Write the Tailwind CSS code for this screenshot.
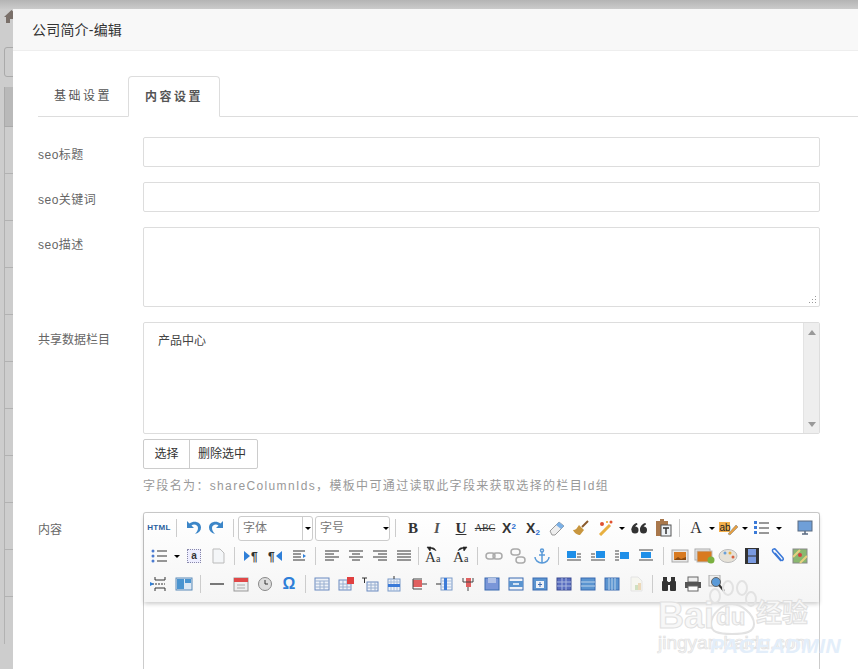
<!DOCTYPE html>
<html lang="zh-CN">
<head>
<meta charset="UTF-8">
<title>公司简介-编辑</title>
<script src="https://cdn.jsdelivr.net/npm/@tailwindcss/browser@4"></script>
</head>
<body class="font-['Liberation_Sans','Noto_Sans_CJK_SC',sans-serif]">
<div class="relative w-[858px] h-[669px] overflow-hidden bg-[#cdcdcd]">
  <!-- page behind the dialog -->
  <div class="h-[9px] bg-gradient-to-b from-[#b4b4b4] to-[#cbcbcb]"></div>
  <div class="pl-[4px]">
    <svg class="mt-[1px] w-[15px] h-[13px]" viewBox="0 0 15 13"><path d="M7.500 0 0 7h2v6h4V9h3v4h4V7h2z" fill="#7a706a"/></svg>
    <div class="mt-[24px] h-[30px] border border-[#aaa] rounded-[3px]"></div>
    <div class="mt-[10px] h-[40px] bg-[#b9b9b9] border-l border-b border-[#aaa]"></div>
    <div class="h-[47px] border-l border-b border-[#b2b2b2]"></div>
    <div class="h-[47px] border-l border-b border-[#b2b2b2]"></div>
    <div class="h-[47px] border-l border-b border-[#b2b2b2]"></div>
    <div class="h-[47px] border-l border-b border-[#b2b2b2]"></div>
    <div class="h-[47px] border-l border-b border-[#b2b2b2]"></div>
    <div class="h-[47px] border-l border-b border-[#b2b2b2]"></div>
    <div class="h-[47px] border-l border-b border-[#b2b2b2]"></div>
    <div class="h-[47px] border-l border-b border-[#b2b2b2]"></div>
    <div class="h-[47px] border-l border-b border-[#b2b2b2]"></div>
    <div class="h-[47px] border-l border-b border-[#b2b2b2]"></div>
    <div class="h-[47px] border-l border-[#b2b2b2]"></div>
  </div>

  <!-- dialog -->
  <div class="absolute left-[13px] top-[9px] w-[845px] h-[660px] bg-white">
    <div class="h-[42px] bg-[#f8f8f8] border-b border-[#eee] pl-[19px] text-[14px] leading-[42px] tracking-[.2px] text-[#333]">公司简介-编辑</div>

    <div class="mt-[25px] ml-[25px] flex h-[41px] border-b border-[#ddd] text-[12px] tracking-[2.500px] text-[#555]">
      <div class="w-[90px] pl-[16px] leading-[41px]">基础设置</div>
      <div class="w-[92px] h-[41px] pl-[16px] leading-[41px] font-bold bg-white border border-[#ddd] border-b-white rounded-t-[4px]">内容设置</div>
    </div>

    <div class="mt-[20px] ml-[25px] w-[782px] text-[12px] text-[#666]">
      <div class="flex h-[30px] mb-[15px]">
        <div class="w-[105px] leading-[36px] tracking-[.5px]">seo标题</div>
        <div class="w-[677px] border border-[#ddd] rounded-[2px]"></div>
      </div>
      <div class="flex h-[30px] mb-[15px]">
        <div class="w-[105px] leading-[36px] tracking-[.5px]">seo关键词</div>
        <div class="w-[677px] border border-[#ddd] rounded-[2px]"></div>
      </div>
      <div class="flex h-[80px] mb-[15px]">
        <div class="w-[105px] leading-[36px] tracking-[.5px]">seo描述</div>
        <div class="relative w-[677px] border border-[#ddd] rounded-[2px]">
          <svg class="absolute right-[1px] bottom-[1px] w-[10px] h-[10px]" viewBox="0 0 10 10" fill="#999"><rect x="7" y="1" width="1" height="1"/><rect x="4" y="4" width="1" height="1"/><rect x="7" y="4" width="1" height="1"/><rect x="1" y="7" width="1" height="1"/><rect x="4" y="7" width="1" height="1"/><rect x="7" y="7" width="1" height="1"/></svg>
        </div>
      </div>
      <div class="flex">
        <div class="w-[105px] leading-[36px]">共享数据栏目</div>
        <div class="w-[677px]">
          <div class="flex h-[112px] border border-[#ddd] rounded-[2px]">
            <div class="flex-1 pl-[14px] pt-[11px] leading-[14px] text-[#444]">产品中心</div>
            <div class="relative w-[16px] bg-[#eee] border-l border-[#e3e3e3]">
              <div class="absolute left-[4px] top-[7px] border-x-[4px] border-x-transparent border-b-[5px] border-b-[#999]"></div>
              <div class="absolute left-[4px] bottom-[6px] border-x-[4px] border-x-transparent border-t-[5px] border-t-[#999]"></div>
            </div>
          </div>
          <div class="mt-[5px] flex w-[115px] h-[30px] border border-[#ccc] rounded-[2px] leading-[28px] text-[#333]">
            <div class="w-[46px] border-r border-[#ccc] text-center">选择</div>
            <div class="flex-1 pl-[8px]">删除选中</div>
          </div>
          <div class="mt-[9px] text-[12px] leading-[16px] tracking-[1.350px] text-[#999] whitespace-nowrap">字段名为：shareColumnIds，模板中可通过读取此字段来获取选择的栏目Id组</div>
        </div>
      </div>
      <div class="flex mt-[18px]">
        <div class="w-[105px] leading-[36px]">内容</div>
        <div class="w-[677px] h-[200px] border-x border-t border-[#ccc] rounded-t-[3px]">
          <div class="h-[89px] pl-[3px] pt-[1px] bg-gradient-to-b from-white to-[#f5f5f5] shadow-[0_2px_4px_rgba(0,0,0,.2)] rounded-t-[3px]">

            <!-- row 1 -->
            <div class="flex items-center h-[28px]">
              <div class="w-[24px] text-center text-[8px] font-bold leading-none tracking-[.3px] text-[#2a5f9e]">HTML</div>
              <div class="w-[10px] flex justify-center"><div class="w-px h-[18px] bg-[#ccc]"></div></div>
              <svg class="w-[24px] h-[18px]" viewBox="0 0 24 18"><path d="M6 2v7h7l-2.500-2.500C13 4.500 17 6 17 9c0 2-1 4-3 6 4-1 6-3.500 6-6.500C20 3 13 1 8.500 4.500z" fill="#3c86c8"/></svg>
              <svg class="w-[24px] h-[18px]" viewBox="0 0 24 18"><path d="M18 2v7h-7l2.500-2.500C11 4.500 7 6 7 9c0 2 1 4 3 6-4-1-6-3.500-6-6.500C4 3 11 1 15.500 4.500z" fill="#3c86c8"/></svg>
              <div class="w-[9px] flex justify-center"><div class="w-px h-[18px] bg-[#ccc]"></div></div>
              <div class="flex mt-[1px] w-[75px] h-[25px] border border-[#ccc] rounded-[3px] bg-white leading-[22px] text-[#777] text-[12px] pl-[4px]"><span class="flex-1">字体</span><span class="w-[10px] border-l border-[#ccc] flex items-center justify-center"><span class="border-x-[3px] border-x-transparent border-t-[3px] border-t-black"></span></span></div>
              <div class="flex mt-[1px] ml-[2px] w-[75px] h-[25px] border border-[#ccc] rounded-[3px] bg-white leading-[22px] text-[#777] text-[12px] pl-[4px]"><span class="flex-1">字号</span><span class="w-[7px] flex items-center justify-center"><span class="border-x-[3px] border-x-transparent border-t-[3px] border-t-black"></span></span></div>
              <div class="w-[11px] flex justify-center"><div class="w-px h-[18px] bg-[#ccc]"></div></div>
              <div class="w-[24px] text-center font-['Liberation_Serif',serif] text-[15px] font-bold leading-none text-[#333]">B</div>
              <div class="w-[24px] text-center font-['Liberation_Serif',serif] text-[15px] font-bold italic leading-none text-[#555]">I</div>
              <div class="w-[24px] text-center font-['Liberation_Serif',serif] text-[15px] font-bold underline leading-none text-[#333]">U</div>
              <div class="w-[24px] text-center font-['Liberation_Serif',serif] text-[10px] line-through leading-none text-[#333]">ABC</div>
              <div class="w-[24px] text-center text-[14px] font-bold leading-none text-[#333]">X<sup class="text-[8px] text-[#2a6fd0]">2</sup></div>
              <div class="w-[24px] text-center text-[14px] font-bold leading-none text-[#333]">X<sub class="text-[8px] text-[#2a6fd0]">2</sub></div>
              <svg class="w-[24px] h-[16px]" viewBox="0 0 24 16"><path d="M5 11 14 2l5 4-9 9H7z" fill="#eee" stroke="#999"/><path d="M14 2l5 4-3 3-5-4z" fill="#7ab0e6"/></svg>
              <svg class="w-[24px] h-[16px]" viewBox="0 0 24 16"><path d="M19 1 13 7" stroke="#8a5a2b" stroke-width="2"/><path d="M10 5l5 5-4 5c-2 0-6-2-7-5 3 0 4-2 6-5z" fill="#c8963e"/></svg>
              <svg class="w-[24px] h-[16px]" viewBox="0 0 24 16"><path d="M7 15 17 5" stroke="#e8b040" stroke-width="3"/><circle cx="9" cy="4" r="2" fill="#e05030"/><circle cx="18" cy="2" r="1.500" fill="#e05030"/><circle cx="14" cy="2" r="1" fill="#e8a020"/></svg>
              <div class="w-[10px] flex justify-center"><span class="border-x-[3px] border-x-transparent border-t-[3px] border-t-black"></span></div>
              <svg class="w-[24px] h-[16px]" viewBox="0 0 24 16" fill="#333"><circle cx="8" cy="10" r="3.500"/><path d="M4.500 10C4.500 6 7 3.500 10 3l.5 1.500C8.500 5.500 7.500 7 7.500 10z"/><circle cx="16.500" cy="10" r="3.500"/><path d="M13 10c0-4 2.500-6.500 5.500-7l.5 1.500C17 5.500 16 7 16 10z"/></svg>
              <svg class="w-[24px] h-[18px]" viewBox="0 0 24 18"><path d="M5 2h4V0h4v2h4v15H5z" fill="#a9784c"/><rect x="10" y="6" width="10" height="11" fill="#eef2f6" stroke="#555"/><path d="M12 9h6M15 9v6" stroke="#333" stroke-width="1.500"/></svg>
              <div class="w-[9px] flex justify-center"><div class="w-px h-[18px] bg-[#ccc]"></div></div>
              <div class="w-[24px] text-center font-['Liberation_Serif',serif] text-[16px] leading-none text-[#333]">A</div>
              <div class="w-[8px] flex justify-center"><span class="border-x-[3px] border-x-transparent border-t-[3px] border-t-black"></span></div>
              <svg class="w-[24px] h-[16px]" viewBox="0 0 24 16"><rect x="3" y="2" width="11" height="10" fill="#f2b04c"/><text x="3.500" y="11" font-size="10" fill="#222">ab</text><path d="M12 14l8-9 2 2-8 8z" fill="#e8a040" stroke="#777" stroke-width=".5"/></svg>
              <div class="w-[9px] flex justify-center"><span class="border-x-[3px] border-x-transparent border-t-[3px] border-t-black"></span></div>
              <svg class="w-[24px] h-[16px]" viewBox="0 0 24 16"><path d="M5 1h3v3H5zM5 6h3v3H5zM5 11h3v3H5z" fill="#3a7ad8"/><path d="M10 3h10M10 8h10M10 13h10" stroke="#333"/></svg>
              <div class="w-[12px] flex justify-center"><span class="border-x-[3px] border-x-transparent border-t-[3px] border-t-black"></span></div>
              <svg class="ml-[8px] w-[24px] h-[16px]" viewBox="0 0 24 16"><rect x="5" y="1" width="14" height="10" fill="#6f9fd8" stroke="#5a6a80"/><path d="M9 14h6M12 11v3" stroke="#5a6a80" stroke-width="1.500"/></svg>
            </div>

            <!-- row 2 -->
            <div class="flex items-center h-[28px]">
              <svg class="w-[24px] h-[16px]" viewBox="0 0 24 16"><circle cx="6" cy="3" r="1.500" fill="#4a7ad0"/><circle cx="6" cy="8" r="1.500" fill="#4a7ad0"/><circle cx="6" cy="13" r="1.500" fill="#4a7ad0"/><path d="M10 3h10M10 8h10M10 13h10" stroke="#333"/></svg>
              <div class="w-[11px] flex justify-center"><span class="border-x-[3px] border-x-transparent border-t-[3px] border-t-black"></span></div>
              <div class="w-[24px] flex justify-center"><div class="w-[14px] h-[14px] border border-dotted border-[#88a] bg-[#eef] text-[10px] font-bold leading-[12px] text-center text-[#333]">a</div></div>
              <svg class="w-[24px] h-[16px]" viewBox="0 0 24 16"><path d="M7 1h7l4 4v10H7z" fill="#f4f6f8" stroke="#bbb"/></svg>
              <div class="w-[9px] flex justify-center"><div class="w-px h-[18px] bg-[#ccc]"></div></div>
              <svg class="w-[24px] h-[16px]" viewBox="0 0 24 16"><path d="M5 3l6 5-6 5z" fill="#2f7fd8"/><text x="12" y="13" font-size="12" font-weight="bold" fill="#333">¶</text></svg>
              <svg class="w-[24px] h-[16px]" viewBox="0 0 24 16"><path d="M19 3l-6 5 6 5z" fill="#2f7fd8"/><text x="5" y="13" font-size="12" font-weight="bold" fill="#333">¶</text></svg>
              <svg class="w-[24px] h-[16px]" viewBox="0 0 24 16"><path d="M6 3h12M6 6h8M6 9h8M6 12h12" stroke="#333" stroke-width="1.200"/><path d="M16 6l3 2-3 2z" fill="#2f7fd8"/></svg>
              <div class="w-[9px] flex justify-center"><div class="w-px h-[18px] bg-[#ccc]"></div></div>
              <svg class="w-[24px] h-[16px]" viewBox="0 0 24 16"><path d="M5 3h14M5 6h9M5 9h14M5 12h9" stroke="#333"/></svg>
              <svg class="w-[24px] h-[16px]" viewBox="0 0 24 16"><path d="M5 3h14M8 6h8M5 9h14M8 12h8" stroke="#333"/></svg>
              <svg class="w-[24px] h-[16px]" viewBox="0 0 24 16"><path d="M5 3h14M10 6h9M5 9h14M10 12h9" stroke="#333"/></svg>
              <svg class="w-[24px] h-[16px]" viewBox="0 0 24 16"><path d="M5 3h14M5 6h14M5 9h14M5 12h14" stroke="#333"/></svg>
              <div class="w-[5px] flex justify-center"><div class="w-px h-[18px] bg-[#ccc]"></div></div>
              <div class="relative w-[24px] h-[18px] font-['Liberation_Serif',serif] text-[#333]"><span class="absolute left-[4px] bottom-0 text-[15px] leading-none">A</span><span class="absolute left-[15px] bottom-[1px] text-[10px] leading-none">a</span><svg class="absolute left-[5px] -top-[1px] w-[12px] h-[6px]" viewBox="0 0 12 6"><path d="M1 1l4 0-1 4zM4 2c3-1 5 0 6 3" fill="#222" stroke="#222" stroke-width=".6"/></svg></div>
              <div class="w-[4px]"></div>
              <div class="relative w-[24px] h-[18px] font-['Liberation_Serif',serif] text-[#333]"><span class="absolute left-[4px] bottom-0 text-[15px] leading-none">A</span><span class="absolute left-[15px] bottom-[1px] text-[10px] leading-none">a</span><svg class="absolute left-[7px] -top-[1px] w-[12px] h-[6px]" viewBox="0 0 12 6"><path d="M11 1l-4 0 1 4zM8 2c-3-1-5 0-6 3" fill="#222" stroke="#222" stroke-width=".6"/></svg></div>
              <div class="w-[9px] flex justify-center"><div class="w-px h-[18px] bg-[#ccc]"></div></div>
              <svg class="w-[24px] h-[16px]" viewBox="0 0 24 16" fill="none" stroke="#aaa" stroke-width="1.500"><rect x="4" y="5" width="9" height="6" rx="3"/><rect x="11" y="5" width="9" height="6" rx="3"/></svg>
              <svg class="w-[24px] h-[16px]" viewBox="0 0 24 16" fill="none" stroke="#aaa" stroke-width="1.500"><rect x="5" y="1" width="9" height="6" rx="3"/><rect x="10" y="9" width="9" height="6" rx="3"/></svg>
              <svg class="w-[24px] h-[16px]" viewBox="0 0 24 16" fill="none" stroke="#5a9ad8" stroke-width="1.500"><circle cx="12" cy="2.500" r="1.500"/><path d="M12 4v11M9 7h6M5 9c0 3 3 6 7 6s7-3 7-6"/></svg>
              <div class="w-[8px] flex justify-center"><div class="w-px h-[18px] bg-[#ccc]"></div></div>
              <svg class="w-[24px] h-[16px]" viewBox="0 0 24 16"><rect x="5" y="3" width="9" height="7" fill="#1f8fe8"/><path d="M15 6h4M15 9h4M5 12h14" stroke="#444"/></svg>
              <svg class="w-[24px] h-[16px]" viewBox="0 0 24 16"><rect x="10" y="3" width="9" height="7" fill="#1f8fe8"/><path d="M5 6h4M5 9h4M5 12h14" stroke="#444"/></svg>
              <svg class="w-[24px] h-[16px]" viewBox="0 0 24 16"><rect x="10" y="4" width="9" height="7" fill="#1f8fe8"/><path d="M5 3h4M5 6h4M5 9h4M5 12h4" stroke="#444"/></svg>
              <svg class="w-[24px] h-[16px]" viewBox="0 0 24 16"><rect x="7" y="4" width="10" height="6" fill="#1f8fe8"/><path d="M5 2h14M5 12h14" stroke="#444"/></svg>
              <div class="w-[10px] flex justify-center"><div class="w-px h-[18px] bg-[#ccc]"></div></div>
              <svg class="w-[24px] h-[16px]" viewBox="0 0 24 16"><rect x="4" y="2" width="16" height="12" fill="#e8e8e8" stroke="#aaa"/><rect x="6" y="4" width="12" height="8" fill="#d87a20"/><path d="M6 12l4-3 3 2 5-2v3z" fill="#8a4a10"/></svg>
              <svg class="w-[24px] h-[16px]" viewBox="0 0 24 16"><rect x="3" y="1" width="15" height="11" fill="#eee" stroke="#aaa"/><rect x="5" y="3" width="15" height="11" fill="#d87a20" stroke="#bbb"/><circle cx="19" cy="12" r="3.500" fill="#7ab040"/></svg>
              <svg class="w-[24px] h-[16px]" viewBox="0 0 24 16"><ellipse cx="12" cy="8" rx="9" ry="6.500" fill="#e6e2d8" stroke="#bbb"/><circle cx="9" cy="5" r="1.500" fill="#6aa0d8"/><circle cx="14" cy="5" r="1.500" fill="#e8b040"/><circle cx="17" cy="9" r="1.500" fill="#d86040"/></svg>
              <svg class="w-[24px] h-[18px]" viewBox="0 0 24 18"><rect x="5" y="1" width="14" height="16" fill="#333"/><rect x="8" y="2" width="8" height="6.500" fill="#7a9ae0"/><rect x="8" y="9.500" width="8" height="6.500" fill="#7a9ae0"/></svg>
              <svg class="w-[24px] h-[16px]" viewBox="0 0 24 16" fill="none" stroke="#3a78d8" stroke-width="1.500"><path d="M17 13 9 4c-2-3 2-4 3-2l7 8c1 2-1 3-2 2L11 5"/></svg>
              <svg class="w-[24px] h-[16px]" viewBox="0 0 24 16"><rect x="5" y="1" width="14" height="14" fill="#8ab870" stroke="#888"/><path d="M5 9l7-7M12 15l7-7" stroke="#e8d080" stroke-width="2"/><circle cx="12" cy="7" r="2" fill="#d84040"/></svg>
            </div>

            <!-- row 3 -->
            <div class="flex items-center h-[28px]">
              <svg class="w-[24px] h-[16px]" viewBox="0 0 24 16"><path d="M8 1v3h10V1M8 15v-3h10v3" fill="none" stroke="#333"/><path d="M5 8h13" stroke="#333" stroke-dasharray="2 1"/><path d="M3 6l4 2-4 2z" fill="#2f7fd8"/></svg>
              <svg class="ml-[1px] w-[24px] h-[16px]" viewBox="0 0 24 16"><rect x="4" y="2" width="16" height="12" fill="#dce8f4" stroke="#5a8ab8"/><rect x="5" y="3" width="7" height="10" fill="#4a94d0"/><rect x="13" y="3" width="6" height="4" fill="#4a94d0"/></svg>
              <div class="w-[9px] flex justify-center"><div class="w-px h-[18px] bg-[#ccc]"></div></div>
              <svg class="w-[24px] h-[16px]" viewBox="0 0 24 16"><path d="M5 8h14" stroke="#222" stroke-width="1.200"/></svg>
              <svg class="w-[24px] h-[16px]" viewBox="0 0 24 16"><rect x="5" y="2" width="14" height="13" fill="#eee" stroke="#999"/><rect x="5" y="2" width="14" height="4" fill="#e04848"/><path d="M8 9h8M8 12h8" stroke="#aaa"/></svg>
              <svg class="w-[24px] h-[16px]" viewBox="0 0 24 16"><circle cx="12" cy="8" r="6.500" fill="#ddd" stroke="#888"/><path d="M12 4v4h3" fill="none" stroke="#333"/></svg>
              <div class="w-[24px] text-center text-[16px] font-bold leading-none text-[#2f7fd8]">Ω</div>
              <div class="w-[9px] flex justify-center"><div class="w-px h-[18px] bg-[#ccc]"></div></div>
              <svg class="w-[24px] h-[16px]" viewBox="0 0 24 16"><rect x="5" y="2" width="14" height="12" fill="#eef2f8" stroke="#6a8ac0"/><path d="M5 5h14M5 8h14M5 11h14M10 5v9M14 5v9" stroke="#9ab0d0"/></svg>
              <svg class="w-[24px] h-[16px]" viewBox="0 0 24 16"><rect x="5" y="4" width="12" height="10" fill="#eef2f8" stroke="#6a8ac0"/><path d="M5 8h12M5 11h12M9 4v10M13 4v10" stroke="#9ab0d0"/><rect x="13" y="1" width="7" height="7" fill="#e04040"/></svg>
              <svg class="w-[24px] h-[16px]" viewBox="0 0 24 16"><path d="M4 2h5M6.500 2v5" stroke="#333"/><rect x="9" y="6" width="11" height="9" fill="#eef2f8" stroke="#6a8ac0"/><path d="M9 9h11M9 12h11M13 6v9M17 6v9" stroke="#9ab0d0"/></svg>
              <svg class="w-[24px] h-[16px]" viewBox="0 0 24 16"><rect x="6" y="3" width="12" height="12" fill="#eef2f8" stroke="#7a9ac8"/><path d="M6 6h12M9 3v12M12 3v12M15 3v12" stroke="#a8bedc"/><rect x="6" y="8" width="12" height="3" fill="#3a7ad8"/><path d="M12 0v3" stroke="#333"/></svg>
              <div class="w-[2px]"></div>
              <svg class="w-[24px] h-[16px]" viewBox="0 0 24 16"><rect x="5" y="4" width="9" height="7" fill="#e06060"/><path d="M14 3H5v10h9M14 8h5" fill="none" stroke="#444"/></svg>
              <svg class="w-[24px] h-[16px]" viewBox="0 0 24 16"><rect x="9" y="2" width="11" height="12" fill="#eef2f8" stroke="#7a9ac8"/><path d="M9 5h11M9 8h11M9 11h11" stroke="#a8bedc"/><rect x="12" y="2" width="3" height="12" fill="#3a7ad8"/><path d="M4 8h5" stroke="#333"/></svg>
              <svg class="w-[24px] h-[16px]" viewBox="0 0 24 16"><rect x="10" y="2" width="5" height="9" fill="#e06060"/><path d="M7 2v4h10V2M12 11v4" fill="none" stroke="#444"/></svg>
              <svg class="w-[24px] h-[16px]" viewBox="0 0 24 16"><rect x="5" y="2" width="14" height="12" fill="#7a96d8" stroke="#3a6ab0"/><rect x="8" y="2" width="8" height="5" fill="#b4c4e8"/></svg>
              <svg class="w-[24px] h-[16px]" viewBox="0 0 24 16"><rect x="5" y="2" width="14" height="12" fill="#eef2f8" stroke="#3a6ab0"/><rect x="5" y="5" width="14" height="6" fill="#5a94d0"/><path d="M9 8h6" stroke="#fff" stroke-width="1.500"/></svg>
              <svg class="w-[24px] h-[16px]" viewBox="0 0 24 16"><rect x="5" y="2" width="14" height="12" fill="#5a94d0" stroke="#3a6ab0"/><rect x="8" y="5" width="8" height="7" fill="#eef2f8"/><path d="M12 6v5M10 8.500h4" stroke="#3a6ab0"/></svg>
              <svg class="w-[24px] h-[16px]" viewBox="0 0 24 16"><rect x="5" y="2" width="14" height="12" fill="#5a6ec0" stroke="#3a4a90"/><path d="M5 6h14M5 10h14M10 2v12M14 2v12" stroke="#aab8e0"/></svg>
              <svg class="w-[24px] h-[16px]" viewBox="0 0 24 16"><rect x="5" y="2" width="14" height="12" fill="#5a94d0" stroke="#3a6ab0"/><path d="M5 6h14M5 10h14" stroke="#bcd4ec"/></svg>
              <svg class="w-[24px] h-[16px]" viewBox="0 0 24 16"><rect x="5" y="2" width="14" height="12" fill="#5a94d0" stroke="#3a6ab0"/><path d="M9 2v12M12 2v12M15 2v12" stroke="#bcd4ec"/></svg>
              <svg class="w-[24px] h-[16px]" viewBox="0 0 24 16"><path d="M7 1h7l4 4v10H7z" fill="#f6f6f0" stroke="#e4e4e4"/><rect x="11" y="9" width="3" height="5" fill="#cfe0c0"/><rect x="14" y="7" width="3" height="7" fill="#ecd8b8"/></svg>
              <div class="w-[9px] flex justify-center"><div class="w-px h-[18px] bg-[#ccc]"></div></div>
              <svg class="w-[24px] h-[16px]" viewBox="0 0 24 16" fill="#333"><rect x="5" y="5" width="6" height="10" rx="1"/><rect x="13" y="5" width="6" height="10" rx="1"/><rect x="6" y="1" width="4" height="4"/><rect x="14" y="1" width="4" height="4"/><rect x="10" y="6" width="4" height="3"/></svg>
              <svg class="w-[24px] h-[16px]" viewBox="0 0 24 16"><rect x="7" y="1" width="10" height="5" fill="#eee" stroke="#666"/><rect x="4" y="6" width="16" height="6" fill="#555"/><rect x="7" y="10" width="10" height="5" fill="#fff" stroke="#666"/></svg>
              <svg class="w-[24px] h-[18px]" viewBox="0 0 24 18"><rect x="4" y="0" width="11" height="11" fill="#eee" stroke="#aaa"/><circle cx="11" cy="7" r="4.500" fill="#5a9ad8" stroke="#666"/><path d="M14 10l5 6" stroke="#333" stroke-width="2"/></svg>
            </div>
          </div>
        </div>
      </div>
    </div>
  </div>

  <!-- baidu watermark, over the page -->
  <div class="absolute left-[656px] top-[575px] w-[202px] h-[94px]">
    <svg class="absolute left-[50px] top-[5px] w-[54px] h-[58px]" viewBox="0 0 54 58" fill="none" stroke="#e2e2e2" stroke-width="2"><ellipse cx="9" cy="16" rx="5" ry="7"/><ellipse cx="22" cy="8" rx="5" ry="7"/><ellipse cx="36" cy="8" rx="5" ry="7"/><ellipse cx="45" cy="19" rx="5" ry="7"/><path d="M5 44c0-10 12-20 21-20s22 10 22 20c0 8-8 10-22 10S5 52 5 44z"/></svg>
    <div class="absolute left-[2px] top-[21px] text-[36px] font-bold leading-[40px] text-[#f7f7f7] [-webkit-text-stroke:1px_#e0e0e0] whitespace-nowrap">Bai</div>
    <div class="absolute left-[60px] top-[28px] text-[24px] font-bold leading-[28px] text-[#f7f7f7] [-webkit-text-stroke:1px_#e0e0e0] whitespace-nowrap">du</div>
    <div class="absolute left-[100px] top-[23px] text-[26px] font-bold leading-[30px] text-[#f7f7f7] [-webkit-text-stroke:1px_#e0e0e0] whitespace-nowrap">经验</div>
    <div class="absolute left-[2px] top-[57px] text-[19px] leading-[22px] text-[#f7f7f7] [-webkit-text-stroke:.7px_#e0e0e0] whitespace-nowrap">jingyan.baidu.com</div>
  </div>
  <div class="absolute left-[710px] top-[636px] text-[21px] font-bold italic leading-[20px] tracking-[.5px] text-[#e3eefa] whitespace-nowrap">PAGEADMIN</div>
</div>
</body>
</html>
